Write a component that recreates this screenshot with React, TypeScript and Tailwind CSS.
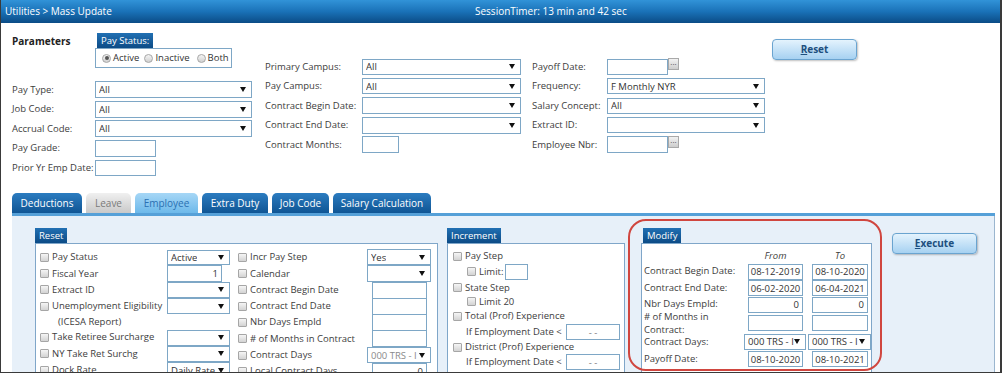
import React from 'react';

function Arrow() {
  return (
    <svg width="6" height="5" viewBox="0 0 6 5" className="shrink-0">
      <path d="M0 0h6L3 5z" fill="#111" />
    </svg>
  );
}

function Sel({ cls, v = '', muted = false }: { cls: string; v?: string; muted?: boolean }) {
  return (
    <div className={`flex items-center justify-between box-border border border-[#7ea7c6] bg-white pl-[3px] pr-[5px] shrink-0 ${cls}`}>
      <span className={`whitespace-nowrap overflow-hidden leading-[13px] ${muted ? 'text-[#8a8a8a]' : 'text-[#333]'}`}>{v}</span>
      <Arrow />
    </div>
  );
}

function Inp({ cls, v = '', center = false }: { cls: string; v?: string; center?: boolean }) {
  return (
    <div
      className={`flex items-center box-border border border-[#7ea7c6] bg-white px-[3px] shrink-0 leading-[13px] whitespace-nowrap text-[#333] ${center ? 'justify-center text-[#777]' : 'justify-end'} ${cls}`}
    >
      {v}
    </div>
  );
}

function Dots() {
  return (
    <div className="self-start mt-[1px] w-[11px] h-[12px] box-border border border-[#a9a9a9] bg-gradient-to-b from-[#f2f2f2] to-[#cdcdcd] flex items-center justify-center text-[8px] leading-[8px] text-[#333]">
      ···
    </div>
  );
}

function Check() {
  return <span className="w-[9px] h-[9px] box-border border border-[#a6a6a6] rounded-[1px] bg-gradient-to-b from-[#f5f5f5] to-[#d3d3d3] shrink-0" />;
}

function Radio({ on = false }: { on?: boolean }) {
  return (
    <span className="w-[9px] h-[9px] box-border border border-[#a6a6a6] rounded-full bg-gradient-to-b from-[#f5f5f5] to-[#d0d0d0] shrink-0 flex items-center justify-center">
      {on && <span className="w-[4px] h-[4px] rounded-full bg-[#555]" />}
    </span>
  );
}

function Title({ children }: { children: React.ReactNode }) {
  return (
    <div className="inline-block h-[15px] px-[4px] leading-[15px] text-white bg-gradient-to-b from-[#2170b3] to-[#0c4b86]">
      {children}
    </div>
  );
}

function Btn({ label, cls }: { label: string; cls: string }) {
  return (
    <div
      className={`flex items-center justify-center box-border border border-[#6aa4d0] rounded-[4px] bg-gradient-to-b from-[#e4f3fd] to-[#a6d1f1] shadow-[1px_1px_2px_rgba(0,0,0,0.25)] font-bold text-[10px] text-[#1d4f7e] ${cls}`}
    >
      <span>
        <span className="underline">{label[0]}</span>
        {label.slice(1)}
      </span>
    </div>
  );
}

function Row({ label, lw, children }: { label: string; lw: string; children: React.ReactNode }) {
  return (
    <div className="flex items-center h-[19.5px]">
      <div className={`${lw} shrink-0 text-[#3d3d3d]`}>{label}</div>
      {children}
    </div>
  );
}

function CRow({ label, lw, children, h = 'h-[16.3px]', check = true }: { label: string; lw: string; children?: React.ReactNode; h?: string; check?: boolean }) {
  return (
    <div className={`flex items-center ${h}`}>
      {check ? <Check /> : <span className="w-[9px] shrink-0" />}
      <div className={`${lw} shrink-0 pl-[3px] text-[#3d3d3d] whitespace-nowrap`}>{label}</div>
      {children}
    </div>
  );
}

export default function App() {
  const tabs = [
    { t: 'Deductions', w: 'w-[70px]', kind: 'dark' },
    { t: 'Leave', w: 'w-[45px]', kind: 'gray' },
    { t: 'Employee', w: 'w-[63px]', kind: 'active' },
    { t: 'Extra Duty', w: 'w-[66px]', kind: 'dark' },
    { t: 'Job Code', w: 'w-[57px]', kind: 'dark' },
    { t: 'Salary Calculation', w: 'w-[98px]', kind: 'dark' },
  ];

  const modRows = [
    ['Contract Begin Date:', '08-12-2019', '08-10-2020'],
    ['Contract End Date:', '06-02-2020', '06-04-2021'],
    ['Nbr Days Empld:', '0', '0'],
  ];

  return (
    <div className="relative w-[1002px] h-[373px] overflow-hidden box-border bg-white border-l border-r-2 border-b border-[#3a3a3a] font-['Open_Sans',sans-serif] text-[9.5px] text-[#333] flex flex-col">
      {/* header */}
      <div className="h-[23px] shrink-0 flex items-center text-white text-[10px] bg-gradient-to-b from-[#3193d8] via-[#1a72b8] to-[#0b4c86]">
        <span className="w-[474px] pl-[4px]">Utilities &gt; Mass Update</span>
        <span>SessionTimer: 13 min and 42 sec</span>
      </div>

      {/* parameters */}
      <div className="h-[170px] shrink-0 flex pl-[11px]">
        <div className="w-[253px] pt-[10px]">
          <div className="flex h-[47px]">
            <div className="w-[83px] font-bold text-[10px] text-[#222] pt-[1px]">Parameters</div>
            <div>
              <div className="ml-[2px]">
                <Title>Pay Status:</Title>
              </div>
              <div className="w-[137px] h-[20px] box-border border border-[#7ea7c6] flex items-center pl-[6px] gap-[2px]">
                <Radio on />
                <span className="mr-[3px]">Active</span>
                <Radio />
                <span className="mr-[5px]">Inactive</span>
                <Radio />
                <span>Both</span>
              </div>
            </div>
          </div>
          <Row label="Pay Type:" lw="w-[83px]"><Sel cls="w-[157px] h-[17px]" v="All" /></Row>
          <Row label="Job Code:" lw="w-[83px]"><Sel cls="w-[157px] h-[17px]" v="All" /></Row>
          <Row label="Accrual Code:" lw="w-[83px]"><Sel cls="w-[157px] h-[17px]" v="All" /></Row>
          <Row label="Pay Grade:" lw="w-[83px]"><Inp cls="w-[61px] h-[17px]" /></Row>
          <Row label="Prior Yr Emp Date:" lw="w-[83px]"><Inp cls="w-[61px] h-[16px]" /></Row>
        </div>

        <div className="w-[267px] pt-[34px]">
          <Row label="Primary Campus:" lw="w-[97px]"><Sel cls="w-[159px] h-[16px]" v="All" /></Row>
          <Row label="Pay Campus:" lw="w-[97px]"><Sel cls="w-[159px] h-[16px]" v="All" /></Row>
          <Row label="Contract Begin Date:" lw="w-[97px]"><Sel cls="w-[159px] h-[17px]" /></Row>
          <Row label="Contract End Date:" lw="w-[97px]"><Sel cls="w-[159px] h-[17px]" /></Row>
          <Row label="Contract Months:" lw="w-[97px]"><Inp cls="w-[37px] h-[17px]" /></Row>
        </div>

        <div className="w-[240px] pt-[34px]">
          <Row label="Payoff Date:" lw="w-[75px]">
            <Inp cls="w-[61px] h-[16px]" />
            <Dots />
          </Row>
          <Row label="Frequency:" lw="w-[75px]"><Sel cls="w-[158px] h-[16px]" v="F Monthly NYR" /></Row>
          <Row label="Salary Concept:" lw="w-[75px]"><Sel cls="w-[158px] h-[16px]" v="All" /></Row>
          <Row label="Extract ID:" lw="w-[75px]"><Sel cls="w-[158px] h-[16px]" /></Row>
          <Row label="Employee Nbr:" lw="w-[75px]">
            <Inp cls="w-[61px] h-[17px]" />
            <Dots />
          </Row>
        </div>

        <div className="pt-[16px]">
          <Btn label="Reset" cls="w-[85px] h-[21px]" />
        </div>
      </div>

      {/* tabs */}
      <div className="h-[20px] shrink-0 flex items-end gap-[4px] pl-[11px]">
        {tabs.map(tab => (
          <div
            key={tab.t}
            className={`${tab.w} h-[20px] rounded-t-[5px] flex items-center justify-center text-[10px] ${
              tab.kind === 'dark'
                ? 'bg-gradient-to-b from-[#2b7cc0] to-[#0f5594] text-white'
                : tab.kind === 'gray'
                ? 'bg-gradient-to-b from-[#f0f0f0] to-[#c9c9c9] text-[#7a7a7a]'
                : 'bg-gradient-to-b from-[#a6d7f6] to-[#6cb9ea] text-[#2a70b2]'
            }`}
          >
            {tab.t}
          </div>
        ))}
      </div>
      <div className="ml-[11px] w-[983px] h-[3px] shrink-0 bg-[#55a0d8]" />

      {/* content */}
      <div className="ml-[11px] w-[983px] flex-1 bg-[#e7f0f9] border-r border-[#9bb6cf] flex items-start pt-[12px]">
        {/* Reset group */}
        <div className="ml-[23px] w-[403px]">
          <Title>Reset</Title>
          <div className="h-[140px] box-border border border-[#7fa6c9] bg-white flex pt-[5px] pl-[4px]">
            <div className="w-[198px]">
              <CRow label="Pay Status" lw="w-[118px]"><Sel cls="w-[63px] h-[15px]" v="Active" /></CRow>
              <CRow label="Fiscal Year" lw="w-[118px]"><Inp cls="w-[55px] h-[17px]" v="1" /></CRow>
              <CRow label="Extract ID" lw="w-[118px]"><Sel cls="w-[63px] h-[16px]" /></CRow>
              <CRow label="Unemployment Eligibility" lw="w-[118px]"><Sel cls="w-[63px] h-[16px]" /></CRow>
              <CRow label="(ICESA Report)" lw="w-[118px] pl-[9px]" h="h-[15px]" check={false} />
              <CRow label="Take Retiree Surcharge" lw="w-[118px]"><Sel cls="w-[63px] h-[16px]" /></CRow>
              <CRow label="NY Take Ret Surchg" lw="w-[118px]"><Sel cls="w-[63px] h-[16px]" /></CRow>
              <CRow label="Dock Rate" lw="w-[118px]"><Sel cls="w-[63px] h-[16px]" v="Daily Rate" /></CRow>
            </div>
            <div>
              <CRow label="Incr Pay Step" lw="w-[120px]"><Sel cls="w-[64px] h-[16px]" v="Yes" /></CRow>
              <CRow label="Calendar" lw="w-[120px]"><Sel cls="w-[64px] h-[17px]" /></CRow>
              <CRow label="Contract Begin Date" lw="w-[125px]"><Inp cls="w-[55px] h-[17px]" /></CRow>
              <CRow label="Contract End Date" lw="w-[125px]"><Inp cls="w-[55px] h-[17px]" /></CRow>
              <CRow label="Nbr Days Empld" lw="w-[125px]"><Inp cls="w-[55px] h-[17px]" /></CRow>
              <CRow label="# of Months in Contract" lw="w-[125px]"><Inp cls="w-[55px] h-[17px]" /></CRow>
              <CRow label="Contract Days" lw="w-[120px]"><Sel cls="w-[64px] h-[16px]" v="000 TRS - I" muted /></CRow>
              <CRow label="Local Contract Days" lw="w-[125px]"><Inp cls="w-[55px] h-[17px]" v="0" /></CRow>
            </div>
          </div>
        </div>

        {/* Increment group */}
        <div className="ml-[9px] w-[178px]">
          <Title>Increment</Title>
          <div className="h-[140px] box-border border border-[#7fa6c9] bg-white pt-[5px] pl-[5px]">
            <CRow label="Pay Step" lw="" h="h-[14px]" />
            <div className="pl-[14px]">
              <CRow label="Limit:" lw="w-[29px]" h="h-[17px]"><Inp cls="w-[23px] h-[16px]" /></CRow>
            </div>
            <CRow label="State Step" lw="" h="h-[15px]" />
            <div className="pl-[14px]">
              <CRow label="Limit 20" lw="" h="h-[13px]" />
            </div>
            <CRow label="Total (Prof) Experience" lw="" h="h-[16px]" />
            <div className="flex items-center h-[16px] pl-[13px]">
              <span className="w-[100px] text-[#3d3d3d]">If Employment Date &lt;</span>
              <Inp cls="w-[54px] h-[16px]" v="- -" center />
            </div>
            <CRow label="District (Prof) Experience" lw="" h="h-[14px]" />
            <div className="flex items-center h-[16px] pl-[13px]">
              <span className="w-[100px] text-[#3d3d3d]">If Employment Date &lt;</span>
              <Inp cls="w-[54px] h-[16px]" v="- -" center />
            </div>
          </div>
        </div>

        {/* Modify group */}
        <div className="ml-[16px] w-[231px]">
          <div className="ml-[2px]">
            <Title>Modify</Title>
          </div>
          <div className="h-[140px] box-border border border-[#7fa6c9] bg-white pt-[4px] pl-[2px]">
            <div className="flex h-[15px] items-center italic text-[#3d3d3d]">
              <span className="w-[104px]" />
              <span className="w-[55px] text-center">From</span>
              <span className="w-[9px]" />
              <span className="w-[56px] text-center">To</span>
            </div>
            {modRows.map(r => (
              <div key={r[0]} className="flex items-center h-[16.5px]">
                <span className="w-[104px] text-[#3d3d3d]">{r[0]}</span>
                <Inp cls={`w-[55px] h-[16px] ${r[1].length > 1 ? '!justify-center !px-0' : ''}`} v={r[1]} />
                <span className="w-[9px]" />
                <Inp cls={`w-[56px] h-[16px] ${r[2].length > 1 ? '!justify-center !px-0' : ''}`} v={r[2]} />
              </div>
            ))}
            <div className="flex items-center h-[20px]">
              <span className="w-[104px] leading-[13px] text-[#3d3d3d]">
                # of Months in
                <br />
                Contract:
              </span>
              <Inp cls="w-[55px] h-[16px]" />
              <span className="w-[9px]" />
              <Inp cls="w-[56px] h-[16px]" />
            </div>
            <div className="flex items-center h-[18px]">
              <span className="w-[104px] text-[#3d3d3d]">Contract Days:</span>
              <Sel cls="w-[62px] h-[16px]" v="000 TRS - I" />
              <span className="w-[2px]" />
              <Sel cls="w-[63px] h-[16px]" v="000 TRS - I" />
            </div>
            <div className="flex items-center h-[17px]">
              <span className="w-[104px] text-[#3d3d3d]">Payoff Date:</span>
              <Inp cls="w-[55px] h-[16px] !justify-center !px-0" v="08-10-2020" />
              <span className="w-[9px]" />
              <Inp cls="w-[56px] h-[16px] !justify-center !px-0" v="08-10-2021" />
            </div>
          </div>
        </div>

        <div className="ml-[20px] mt-[5px]">
          <Btn label="Execute" cls="w-[85px] h-[21px]" />
        </div>
      </div>

      {/* annotation ring */}
      <div className="absolute left-[627px] top-[219px] w-[254px] h-[152px] rounded-[18px] border-2 border-[#d0463f] pointer-events-none" />
    </div>
  );
}
